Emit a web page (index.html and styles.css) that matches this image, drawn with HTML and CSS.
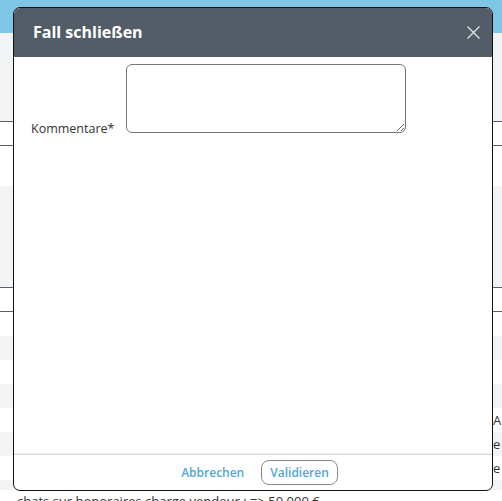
FILE: index.html
```html
<!DOCTYPE html>
<html lang="de">
<head>
  <meta charset="UTF-8">
  <meta name="viewport" content="width=device-width, initial-scale=1.0">
  <title>Fall schließen</title>
  <link rel="stylesheet" href="styles.css">
</head>
<body>
  <!-- Page behind the dialog -->
  <div class="topbar"></div>
  <div class="page">
    <div class="block grey tall"></div>
    <div class="block line-row"></div>
    <div class="block white-gap"></div>
    <div class="block grey mid"></div>
    <div class="block line-row"></div>
    <div class="row"></div>
    <div class="row grey"></div>
    <div class="row"></div>
    <div class="row grey"></div>
    <div class="row"><span class="cell">AI</span></div>
    <div class="row grey"><span class="cell">e</span></div>
    <div class="row"><span class="cell">e</span></div>
    <div class="row grey short"></div>
    <div class="note">chats sur honoraires charge vendeur : =&gt; 50 000 €</div>
  </div>

  <!-- Dialog -->
  <div class="modal">
    <div class="modal-header">
      <h2 class="modal-title">Fall schließen</h2>
      <button class="close-btn" aria-label="Schließen">
        <svg width="13" height="13" viewBox="0 0 13 13">
          <path d="M0.5 0.5 L12.5 12.5 M12.5 0.5 L0.5 12.5" stroke="#e3e6ea" stroke-width="1.2" fill="none"/>
        </svg>
      </button>
    </div>
    <div class="modal-body">
      <label class="field-label" for="comment">Kommentare*</label><textarea id="comment" class="comment"></textarea>
    </div>
    <div class="modal-footer">
      <button class="btn link">Abbrechen</button>
      <button class="btn outline">Validieren</button>
    </div>
  </div>
</body>
</html>
```

FILE: styles.css
```css
body {
  margin: 0;
  padding: 0;
  font-family: 'Open Sans', sans-serif;
  background-color: #ffffff;
  color: #333;
  overflow: hidden;
  height: 501px;
}

.topbar {
  height: 33px;
  background-color: #7ec6e5;
}

.page {
  position: relative;
}

.block {
  border-bottom: 1px solid #59626c;
}

.grey {
  background-color: #f2f3f5;
}

.tall {
  height: 88px;
}

.line-row {
  height: 23px;
  background-color: #ffffff;
}

.white-gap {
  height: 40px;
  border-bottom: none;
}

.mid {
  height: 101px;
}

.row {
  height: 24px;
  display: flex;
  align-items: center;
}

.row.short {
  height: 10px;
}

.cell {
  padding-left: 493px;
  font-size: 13px;
  color: #333;
  white-space: nowrap;
}

.note {
  padding: 2px 0 0 17px;
  font-size: 13px;
  color: #333;
  white-space: nowrap;
}

/* Dialog */
.modal {
  position: absolute;
  left: 13px;
  top: 7px;
  width: 480px;
  height: 484px;
  box-sizing: border-box;
  border: 1px solid #111;
  border-radius: 7px;
  background-color: #ffffff;
  overflow: hidden;
  display: flex;
  flex-direction: column;
}

.modal-header {
  height: 49px;
  flex-shrink: 0;
  background-color: #535d68;
  display: flex;
  align-items: center;
  justify-content: space-between;
  padding: 0 12px 0 19px;
}

.modal-title {
  margin: 0;
  font-size: 16px;
  font-weight: 700;
  color: #ffffff;
  padding-bottom: 1px;
}

.close-btn {
  background: none;
  border: none;
  padding: 0;
  width: 13px;
  height: 13px;
  cursor: pointer;
  display: flex;
}

.modal-body {
  flex: 1;
  padding: 7px 0 0 17px;
}

.field-label {
  font-size: 12.5px;
  color: #333;
  margin-right: 12px;
}

.comment {
  width: 280px;
  height: 69px;
  box-sizing: border-box;
  border: 1px solid #767676;
  border-radius: 6px;
  resize: vertical;
  vertical-align: baseline;
}

.modal-footer {
  height: 35px;
  flex-shrink: 0;
  border-top: 1px solid #d6d6d6;
  box-shadow: 0 -1px 2px rgba(0, 0, 0, 0.08);
  display: flex;
  align-items: center;
  justify-content: center;
  gap: 5px;
  padding-left: 1px;
}

.btn {
  font-family: 'Open Sans', sans-serif;
  font-size: 12px;
  font-weight: 600;
  color: #4ea7db;
  background: none;
  height: 25px;
  padding: 0 11px;
  border-radius: 8px;
  cursor: pointer;
}

.btn.link {
  border: 1px solid transparent;
}

.btn.outline {
  border: 1px solid #8a8a8a;
  padding: 0 8px;
}
```
